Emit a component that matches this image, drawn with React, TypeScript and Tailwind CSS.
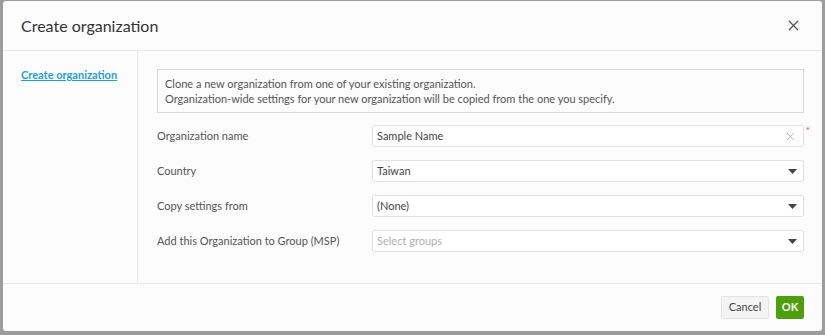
import { X } from 'lucide-react';

const font = { fontFamily: 'Lato, "Noto Sans", sans-serif' };

function Caret() {
  return (
    <svg width="9" height="5" viewBox="0 0 9 5" className="shrink-0">
      <path d="M0 0 L9 0 L4.5 5 Z" fill="#444" />
    </svg>
  );
}

export default function App() {
  const rows = [
    { label: 'Organization name', value: 'Sample Name', kind: 'text' },
    { label: 'Country', value: 'Taiwan', kind: 'select' },
    { label: 'Copy settings from', value: '(None)', kind: 'select' },
    { label: 'Add this Organization to Group (MSP)', value: 'Select groups', kind: 'placeholder' },
  ];

  return (
    <div className="h-[335px] w-[825px] bg-[#9c9c9c] pl-[3px] pr-[3px] pt-[1px] pb-[4px]" style={font}>
      <div className="flex h-full flex-col rounded-[3px] bg-[#fcfcfc]">
        {/* Header */}
        <div className="flex h-[50px] items-center justify-between border-b border-[#e8e8e8] pl-[18px] pr-[20px]">
          <span className="text-[16px] text-[#333]">Create organization</span>
          <X className="h-[17px] w-[17px] text-[#555]" strokeWidth={1.8} />
        </div>

        {/* Body */}
        <div className="flex h-[233px] border-b border-[#e8e8e8]">
          <div className="w-[135px] border-r border-[#e8e8e8] pl-[18px] pt-[16px]">
            <div className="text-[11px] font-bold leading-[15px] text-[#1d9fe0] underline">Create organization</div>
          </div>
          <div className="flex-1 pl-[19px] pr-[18px] pt-[18px]">
            <div className="border border-[#d8d8d8] px-[7px] py-[6px] text-[11px] leading-[15px] text-[#555]">
              <div>Clone a new organization from one of your existing organization.</div>
              <div>Organization-wide settings for your new organization will be copied from the one you specify.</div>
            </div>
            <div className="mt-[12px] flex flex-col gap-[13px]">
              {rows.map((r) => (
                <div key={r.label} className="flex h-[22px] items-center">
                  <span className="w-[215px] text-[11px] text-[#555]">{r.label}</span>
                  <div className="relative flex h-[22px] flex-1 items-center justify-between rounded-[2px] border border-[#e2e2e2] bg-white pl-[4px] pr-[6px]">
                    <span className={`text-[11px] ${r.kind === 'placeholder' ? 'text-[#b0b0b0]' : 'text-[#444]'}`}>
                      {r.value}
                    </span>
                    {r.kind === 'text' ? (
                      <X className="h-[13px] w-[13px] text-[#aaa]" strokeWidth={1.5} />
                    ) : (
                      <Caret />
                    )}
                    {r.kind === 'text' && (
                      <span className="absolute -right-[7px] -top-[3px] text-[10px] text-[#f03c3c]">*</span>
                    )}
                  </div>
                </div>
              ))}
            </div>
          </div>
        </div>

        {/* Footer */}
        <div className="flex flex-1 items-center justify-end gap-[7px] pr-[18px]">
          <button className="h-[23px] w-[48px] rounded-[2px] border border-[#e4e4e4] bg-[#f4f4f4] text-[11px] text-[#444]">
            Cancel
          </button>
          <button className="h-[23px] w-[28px] rounded-[2px] bg-[#4d9f0c] text-[11px] font-bold text-white">
            OK
          </button>
        </div>
      </div>
    </div>
  );
}
